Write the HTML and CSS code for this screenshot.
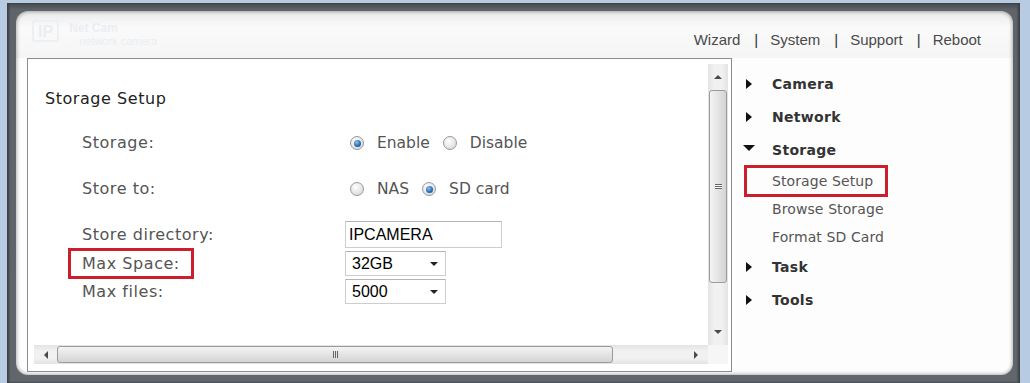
FILE: index.html
```html
<!DOCTYPE html>
<html lang="en">
<head>
    <meta charset="UTF-8">
    <title>Storage Setup</title>
    <link rel="stylesheet" href="styles.css">
</head>
<body>
    <div class="window">
        <div class="panel">
            <div class="header">
                <div class="logo">
                    <span class="logo-mark">IP</span>
                    <span class="logo-text">
                        <span>Net Cam</span>
                        <span class="logo-sub">network camera</span>
                    </span>
                </div>
                <div class="links">
                    <a href="#">Wizard</a><span class="sep">|</span><a href="#">System</a><span class="sep">|</span><a href="#">Support</a><span class="sep">|</span><a href="#">Reboot</a>
                </div>
            </div>
            <div class="main">
                <div class="frame">
                    <div class="scroller">
                        <div class="page">
                            <div class="title">Storage Setup</div>
                            <div class="row r1">
                                <div class="label">Storage:</div>
                                <div class="radios">
                                    <span class="radio on"></span><span class="opt">Enable</span>
                                    <span class="radio"></span><span class="opt">Disable</span>
                                </div>
                            </div>
                            <div class="row r2">
                                <div class="label">Store to:</div>
                                <div class="radios">
                                    <span class="radio"></span><span class="opt">NAS</span>
                                    <span class="radio on"></span><span class="opt">SD card</span>
                                </div>
                            </div>
                            <div class="row r3">
                                <div class="label">Store directory:</div>
                                <div class="field">IPCAMERA</div>
                            </div>
                            <div class="row r4">
                                <div class="label"><span class="mark">Max Space:</span></div>
                                <div class="select">32GB<span class="caret"></span></div>
                            </div>
                            <div class="row r5">
                                <div class="label">Max files:</div>
                                <div class="select">5000<span class="caret"></span></div>
                            </div>
                        </div>
                        <div class="vbar">
                            <div class="btn up"><span class="arr-up"></span></div>
                            <div class="vthumb"><span class="grip-v"></span></div>
                            <div class="btn down"><span class="arr-down"></span></div>
                        </div>
                        <div class="hbar">
                            <div class="btn left"><span class="arr-left"></span></div>
                            <div class="hthumb"><span class="grip-h"></span></div>
                            <div class="btn right"><span class="arr-right"></span></div>
                        </div>
                        <div class="corner"></div>
                    </div>
                </div>
                <ul class="menu">
                    <li class="item"><svg class="tri" width="30" height="33"><polygon points="4,11 10,16 4,21" /></svg>Camera</li>
                    <li class="item"><svg class="tri" width="30" height="33"><polygon points="4,11 10,16 4,21" /></svg>Network</li>
                    <li class="item"><svg class="tri" width="30" height="33"><polygon points="1,11 13,11 7,17" /></svg>Storage</li>
                    <li class="sub marked">Storage Setup</li>
                    <li class="sub">Browse Storage</li>
                    <li class="sub">Format SD Card</li>
                    <li class="item"><svg class="tri" width="30" height="33"><polygon points="4,11 10,16 4,21" /></svg>Task</li>
                    <li class="item"><svg class="tri" width="30" height="33"><polygon points="4,11 10,16 4,21" /></svg>Tools</li>
                </ul>
            </div>
        </div>
    </div>
</body>
</html>
```

FILE: styles.css
```css
* {
    box-sizing: border-box;
}

html,
body {
    margin: 0;
}

body {
    width: 1030px;
    height: 383px;
    overflow: hidden;
    background: #b7cbe3;
    font-family: "DejaVu Sans", Verdana, sans-serif;
}

.window {
    margin: 3px 10px 0 7px;
    height: 380px;
    padding: 8px 7px 8px 9px;
    background: linear-gradient(#43494f, #5e646a 7px, #60666c);
    box-shadow: inset 2px 0 2px #3b4045, inset -2px 0 2px #3b4045;
}

.panel {
    height: 364px;
    border-radius: 12px;
    background: linear-gradient(#e9e9e9, #fafafa 16px, #f5f5f5 47px, #fdfdfd 47px);
    box-shadow: inset 0 0 4px rgba(0, 0, 0, 0.45);
    display: flex;
    flex-direction: column;
}

.header {
    height: 47px;
    display: flex;
    justify-content: space-between;
}

.logo {
    display: flex;
    gap: 10px;
    padding: 9px 0 0 16px;
    color: #eaeef2;
}

.logo-mark {
    font: bold 16px "Liberation Sans", Arial, sans-serif;
    padding: 1px 4px;
    border: 2px solid #edf0f3;
    border-radius: 3px;
    height: 22px;
}

.logo-text {
    display: flex;
    flex-direction: column;
    font: bold 12px "Liberation Sans", Arial, sans-serif;
    line-height: 13px;
    padding-top: 2px;
}

.logo-sub {
    font-weight: normal;
    font-size: 11px;
    padding-left: 10px;
}

.links {
    padding: 19px 32px 0 0;
    font: 15px "Liberation Sans", Arial, sans-serif;
    line-height: 20px;
    color: #4a4a4a;
}

.links a {
    color: #4a4a4a;
    text-decoration: none;
}

.sep {
    margin: 0 12px 0 14px;
    color: #333;
}

.main {
    display: flex;
    flex: 1;
}

.frame {
    margin-left: 11px;
    width: 705px;
    height: 314px;
    border: 1px solid #8c8c8c;
    background: #fff;
    padding: 5px 3px 7px 6px;
}

.scroller {
    height: 100%;
    display: grid;
    grid-template-columns: 1fr 20px;
    grid-template-rows: 1fr 19px;
}

/* form page inside the frame */
.page {
    padding-top: 25px;
    font-size: 16px;
    letter-spacing: 0.55px;
    line-height: 20px;
    color: #555;
    overflow: hidden;
}

.title {
    padding-left: 11px;
    color: #222;
}

.row {
    display: grid;
    grid-template-columns: 263px auto;
    align-items: center;
    padding-left: 48px;
}

.r1 {
    margin-top: 21px;
    height: 26px;
}

.r2 {
    margin-top: 20px;
    height: 26px;
}

.r3 {
    margin-top: 19px;
    height: 27px;
}

.r4,
.r5 {
    margin-top: 3px;
    height: 25px;
}

.mark {
    display: inline-block;
    line-height: 25px;
    padding: 0 11px 0 11px;
    margin-left: -11px;
    outline: 3px solid #cc1f2d;
}

.radios {
    display: flex;
    align-items: center;
    padding-left: 5px;
    font-size: 15.5px;
    letter-spacing: 0;
}

.radio {
    width: 14px;
    height: 14px;
    border-radius: 50%;
    border: 1px solid #9a9a9a;
    background: radial-gradient(circle at 40% 35%, #ffffff, #e6e6e6 55%, #cfcfcf);
    margin-right: 13px;
    display: flex;
    align-items: center;
    justify-content: center;
}

.opt {
    margin-right: 13px;
}

.radio.on::after {
    content: "";
    width: 7px;
    height: 7px;
    border-radius: 50%;
    background: radial-gradient(circle at 40% 35%, #8cc4f0, #2a6fb2 55%, #0f3e72);
}

.field,
.select {
    font: 16px "Liberation Sans", Arial, sans-serif;
    letter-spacing: 0;
    color: #000;
    border: 1px solid #cdcdcd;
    border-top-color: #b5b5b5;
    background: #fff;
    display: flex;
    align-items: center;
}

.field {
    width: 157px;
    height: 27px;
    padding-left: 3px;
}

.select {
    width: 101px;
    height: 25px;
    padding-left: 6px;
    position: relative;
}

.caret {
    position: absolute;
    right: 7px;
    top: 10px;
    border-left: 4px solid transparent;
    border-right: 4px solid transparent;
    border-top: 4px solid #222;
}

/* scrollbars */
.vbar {
    display: flex;
    flex-direction: column;
    background: linear-gradient(90deg, #e3e3e3, #f1f1f1 30%, #f1f1f1 70%, #e3e3e3);
}

.hbar {
    display: flex;
    background: linear-gradient(#e3e3e3, #f1f1f1 30%, #f1f1f1 70%, #e3e3e3);
}

.corner {
    background: #f6f6f6;
}

.btn {
    display: flex;
    align-items: center;
    justify-content: center;
}

.up {
    height: 25px;
    margin-bottom: 1px;
}

.down {
    height: 26px;
    margin-top: auto;
}

.left {
    width: 23px;
}

.right {
    width: 25px;
    margin-left: auto;
}

.arr-up {
    border-left: 4px solid transparent;
    border-right: 4px solid transparent;
    border-bottom: 4px solid #4a4a4a;
}

.arr-down {
    border-left: 4px solid transparent;
    border-right: 4px solid transparent;
    border-top: 4px solid #4a4a4a;
}

.arr-left {
    border-top: 4px solid transparent;
    border-bottom: 4px solid transparent;
    border-right: 4px solid #4a4a4a;
}

.arr-right {
    border-top: 4px solid transparent;
    border-bottom: 4px solid transparent;
    border-left: 4px solid #4a4a4a;
}

.vthumb {
    height: 193px;
    margin: 0 1px;
    border: 1px solid #9b9b9b;
    border-radius: 3px;
    background: linear-gradient(90deg, #f4f4f4, #e4e4e4 50%, #d4d4d4);
    display: flex;
    align-items: center;
    justify-content: center;
}

.hthumb {
    width: 556px;
    margin: 1px 0 1px 0;
    border: 1px solid #9b9b9b;
    border-radius: 3px;
    background: linear-gradient(#f4f4f4, #e4e4e4 50%, #d4d4d4);
    display: flex;
    align-items: center;
    justify-content: center;
}

.grip-v {
    width: 7px;
    height: 5px;
    border-top: 1px solid #666;
    border-bottom: 1px solid #666;
    background: linear-gradient(#fff 1px, #666 1px, #666 2px, #fff 2px);
}

.grip-h {
    width: 5px;
    height: 7px;
    border-left: 1px solid #666;
    border-right: 1px solid #666;
    background: linear-gradient(90deg, #e4e4e4 1px, #666 1px, #666 2px, #e4e4e4 2px);
}

/* right side menu */
.menu {
    list-style: none;
    margin: 0;
    padding: 10px 0 0 10px;
    color: #333;
}

.item {
    display: flex;
    height: 33px;
    line-height: 33px;
    font-size: 14px;
    letter-spacing: 0.3px;
    font-weight: bold;
}

.tri {
    flex: none;
    fill: #111;
}

.sub {
    height: 28px;
    line-height: 28px;
    font-size: 14px;
    letter-spacing: 0.1px;
    color: #555;
    padding-left: 30px;
}

.sub.marked {
    width: fit-content;
    margin-left: 4px;
    padding: 0 13px 0 26px;
    outline: 3px solid #cc1f2d;
    outline-offset: -1px;
}
```
